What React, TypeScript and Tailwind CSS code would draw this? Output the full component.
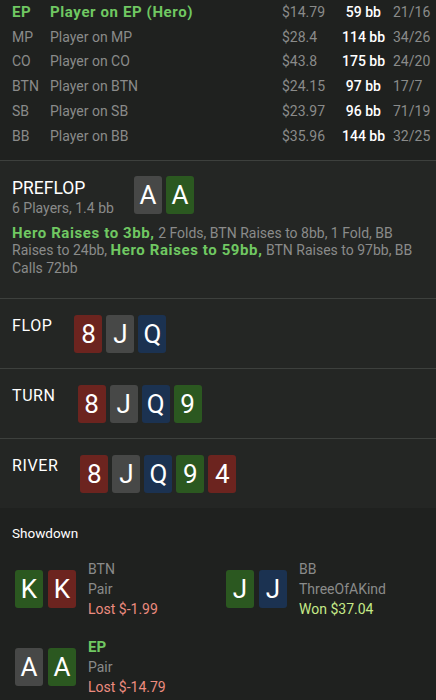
import React from 'react';

type Suit = 's' | 'h' | 'd' | 'c';

const suitBg: Record<Suit, string> = {
  s: 'bg-[#474847]',
  h: 'bg-[#6c241f]',
  d: 'bg-[#1b3251]',
  c: 'bg-[#2b5820]',
};

const players = [
  { pos: 'EP', name: 'Player on EP (Hero)', money: '$14.79', bb: '59 bb', ratio: '21/16', hero: true },
  { pos: 'MP', name: 'Player on MP', money: '$28.4', bb: '114 bb', ratio: '34/26' },
  { pos: 'CO', name: 'Player on CO', money: '$43.8', bb: '175 bb', ratio: '24/20' },
  { pos: 'BTN', name: 'Player on BTN', money: '$24.15', bb: '97 bb', ratio: '17/7' },
  { pos: 'SB', name: 'Player on SB', money: '$23.97', bb: '96 bb', ratio: '71/19' },
  { pos: 'BB', name: 'Player on BB', money: '$35.96', bb: '144 bb', ratio: '32/25' },
];

const hero = 'text-[#70c862] font-bold text-[15px] tracking-[0.6px]';

const Card = ({ rank, suit }: { rank: string; suit: Suit }) => (
  <div
    className={`w-[28px] h-[38px] rounded-[3px] flex items-center justify-center text-white text-[26px] leading-none ${suitBg[suit]}`}
  >
    {rank}
  </div>
);

const Street = ({ label, cards }: { label: string; cards: [string, Suit][] }) => (
  <section className="flex items-start gap-[22px] px-3 pt-4 pb-[15px] border-t border-[#3d403d]">
    <span className="text-[16px] leading-[22px] tracking-[0.6px] text-white">{label}</span>
    <div className="flex gap-1">
      {cards.map(([r, s], i) => (
        <Card key={i} rank={r} suit={s} />
      ))}
    </div>
  </section>
);

const Hand = ({ cards, pos, hand, result, won, isHero }: any) => (
  <div className="flex items-center gap-3">
    <div className="flex gap-[5px]">
      {cards.map(([r, s]: [string, Suit], i: number) => (
        <Card key={i} rank={r} suit={s} />
      ))}
    </div>
    <div className="flex flex-col text-[14px] leading-[20px]">
      <span className={isHero ? 'text-[#70c862] font-bold text-[15px]' : 'text-[#8a8b8a]'}>{pos}</span>
      <span className="text-[#8a8b8a]">{hand}</span>
      <span className={won ? 'text-[#c6ea88]' : 'text-[#ec8c7f]'}>{result}</span>
    </div>
  </div>
);

export default function App() {
  return (
    <div
      className="w-[436px] h-[700px] overflow-hidden bg-[#242624] text-[14px]"
      style={{ fontFamily: 'Roboto, "Noto Sans", sans-serif' }}
    >
      {/* Players table */}
      <div className="bg-[#1f211f] pb-[11px]">
        {players.map((p) => (
          <div key={p.pos} className="flex items-center h-[24.8px] pl-3">
            <span className={`w-[38px] ${p.hero ? hero : 'text-[#8a8b8a]'}`}>{p.pos}</span>
            <span className={`flex-1 ${p.hero ? hero : 'text-[#8a8b8a]'}`}>{p.name}</span>
            <span className="w-[60px] text-[#8a8b8a]">{p.money}</span>
            <span className="w-[39px] text-right text-white font-medium whitespace-nowrap">{p.bb}</span>
            <span className="w-[43px] ml-3 text-[#8a8b8a]">{p.ratio}</span>
          </div>
        ))}
      </div>

      {/* Preflop */}
      <section className="px-3 pt-[15px] pb-[21px] border-t border-[#3d403d]">
        <div className="flex items-start gap-5">
          <div className="flex flex-col pt-[1px]">
            <span className="text-[17.5px] leading-[22px] text-white">PREFLOP</span>
            <span className="text-[14px] leading-[18px] text-[#8a8b8a]">6 Players, 1.4 bb</span>
          </div>
          <div className="flex gap-1">
            <Card rank="A" suit="s" />
            <Card rank="A" suit="c" />
          </div>
        </div>
        <p className="mt-2 text-[14px] leading-[17.5px] text-[#8a8b8a]">
          <span className={hero}>Hero Raises to 3bb,</span> 2 Folds, BTN Raises to 8bb, 1 Fold, BB
          Raises to 24bb, <span className={hero}>Hero Raises to 59bb,</span> BTN Raises to 97bb, BB
          Calls 72bb
        </p>
      </section>

      <Street label="FLOP" cards={[['8', 'h'], ['J', 's'], ['Q', 'd']]} />
      <Street label="TURN" cards={[['8', 'h'], ['J', 's'], ['Q', 'd'], ['9', 'c']]} />
      <Street label="RIVER" cards={[['8', 'h'], ['J', 's'], ['Q', 'd'], ['9', 'c'], ['4', 'h']]} />

      {/* Showdown */}
      <section className="bg-[#1f211f] h-full px-3 pt-4">
        <h3 className="text-[13.5px] leading-[18px] text-white">Showdown</h3>
        <div className="grid grid-cols-[211px_1fr] gap-y-[18px] mt-[17px] pl-[3px]">
          <Hand cards={[['K', 'c'], ['K', 'h']]} pos="BTN" hand="Pair" result="Lost $-1.99" />
          <Hand cards={[['J', 'c'], ['J', 'd']]} pos="BB" hand="ThreeOfAKind" result="Won $37.04" won />
          <Hand cards={[['A', 's'], ['A', 'c']]} pos="EP" hand="Pair" result="Lost $-14.79" isHero />
        </div>
      </section>
    </div>
  );
}
